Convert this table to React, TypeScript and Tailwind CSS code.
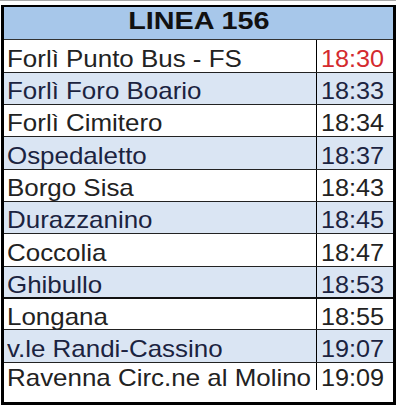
const STOPS = [
  { name: "Forlì Punto Bus - FS", time: "18:30", blue: false, h: "h-[33px]" },
  { name: "Forlì Foro Boario", time: "18:33", blue: true, h: "h-[32px]" },
  { name: "Forlì Cimitero", time: "18:34", blue: false, h: "h-[32px]" },
  { name: "Ospedaletto", time: "18:37", blue: true, h: "h-[33px]" },
  { name: "Borgo Sisa", time: "18:43", blue: false, h: "h-[32px]" },
  { name: "Durazzanino", time: "18:45", blue: true, h: "h-[32px]" },
  { name: "Coccolia", time: "18:47", blue: false, h: "h-[33px]" },
  { name: "Ghibullo", time: "18:53", blue: true, h: "h-[32px]", thick: true },
  { name: "Longana", time: "18:55", blue: false, h: "h-[31px]" },
  { name: "v.le Randi-Cassino", time: "19:07", blue: true, h: "h-[33px]" },
  { name: "Ravenna Circ.ne al Molino", time: "19:09", blue: false, h: "h-[27px]", last: true },
];

function Row({ stop, index }: { stop: (typeof STOPS)[number]; index: number }) {
  const border = stop.last ? "" : stop.thick ? "border-b-2 border-[#111]" : "border-b border-[#222]";
  const text = stop.blue ? "text-[#1b2340]" : "text-[#222]";
  const pad = stop.last ? "pt-[2px]" : "pt-[5px]";
  return (
    <div className={`flex ${stop.h} ${border} ${stop.blue ? "bg-[#dae5f3]" : "bg-white"}`}>
      <div className={`flex w-[313px] items-center overflow-x-hidden border-r border-black pl-[3px] ${pad}`}>
        <span className={`origin-left scale-x-108 whitespace-nowrap text-[24px] leading-none ${text}`}>
          {stop.name}
        </span>
      </div>
      <div className={`flex flex-1 items-center overflow-x-hidden pl-[4px] ${pad}`}>
        <span
          className={`origin-left scale-x-105 whitespace-nowrap text-[24px] leading-none ${
            index === 0 ? "text-[#d42a2e]" : text
          }`}
        >
          {stop.time}
        </span>
      </div>
    </div>
  );
}

export default function App() {
  return (
    <div className="h-[408px] w-[400px] bg-white font-['Liberation_Sans',Arial,sans-serif]">
      <div className="h-px w-[396px] bg-[#a8a8a8]" />
      <div className="ml-px mt-[4px] h-[400px] w-[395px] overflow-hidden border-x-[3px] border-b-[3px] border-t-2 border-black">
        <div className="flex h-[33px] items-center justify-center border-b border-[#333] bg-[#a7c7ea] pb-[4px]">
          <span className="scale-x-120 text-[24px] font-bold leading-none text-[#111]">LINEA 156</span>
        </div>
        {STOPS.map((stop, i) => (
          <Row key={stop.name} stop={stop} index={i} />
        ))}
      </div>
    </div>
  );
}
